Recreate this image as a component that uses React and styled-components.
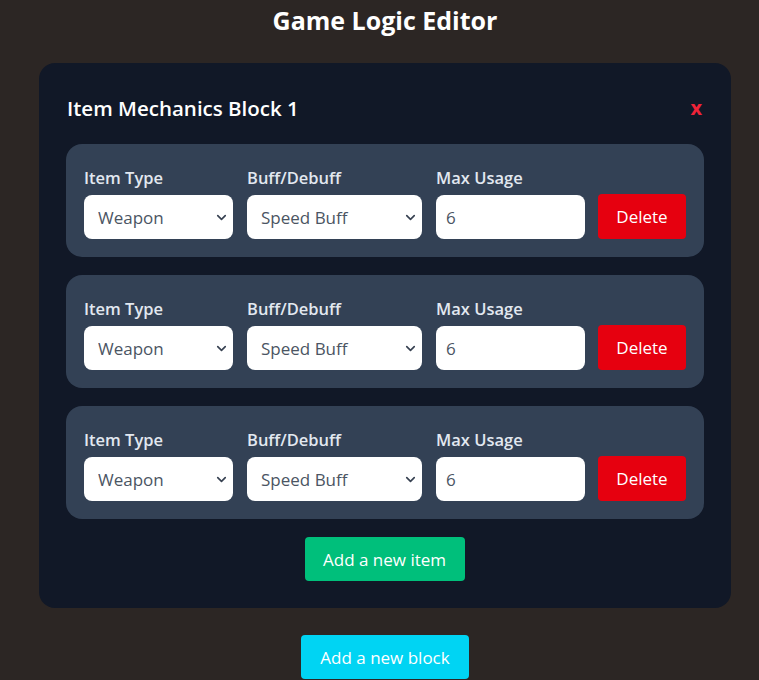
import React from 'react';
import styled, { createGlobalStyle } from 'styled-components';
import { ChevronDown } from 'lucide-react';

const GlobalStyle = createGlobalStyle`
  html, body {
    margin: 0;
    padding: 0;
    background: #2c2624;
    font-family: "Open Sans", "Noto Sans", sans-serif;
  }
  * { box-sizing: border-box; }
`;

const items = [1, 2, 3];

const App = () => {
    return (
        <Page>
            <GlobalStyle />
            <Title>Game Logic Editor</Title>
            <Block>
                <BlockHeader>
                    <BlockTitle>Item Mechanics Block 1</BlockTitle>
                    <CloseButton>x</CloseButton>
                </BlockHeader>
                <ItemList>
                    {items.map((i) => (
                        <ItemRow key={i}>
                            <Field width={149}>
                                <Label>Item Type</Label>
                                <SelectWrap>
                                    <Select defaultValue="weapon">
                                        <option value="weapon">Weapon</option>
                                        <option value="armor">Armor</option>
                                    </Select>
                                    <Chevron><ChevronDown size={15} strokeWidth={2.6} /></Chevron>
                                </SelectWrap>
                            </Field>
                            <Field width={175}>
                                <Label>Buff/Debuff</Label>
                                <SelectWrap>
                                    <Select defaultValue="speed">
                                        <option value="speed">Speed Buff</option>
                                        <option value="slow">Slow Debuff</option>
                                    </Select>
                                    <Chevron><ChevronDown size={15} strokeWidth={2.6} /></Chevron>
                                </SelectWrap>
                            </Field>
                            <Field width={149}>
                                <Label>Max Usage</Label>
                                <NumberInput type="text" defaultValue="6" />
                            </Field>
                            <DeleteButton>Delete</DeleteButton>
                        </ItemRow>
                    ))}
                </ItemList>
                <Centered gap={18}>
                    <ActionButton color="#00bf7b" width={160}>Add a new item</ActionButton>
                </Centered>
            </Block>
            <Centered gap={27}>
                <ActionButton color="#00d4f3" width={168}>Add a new block</ActionButton>
            </Centered>
        </Page>
    );
};

export default App;

const Page = styled.div`
    display: flex;
    flex-direction: column;
    align-items: center;
    padding-top: 3px;
    padding-left: 11px;
    height: 680px;
    overflow: hidden;
`;

const Title = styled.h1`
    margin: 0;
    height: 34px;
    line-height: 34px;
    font-size: 25px;
    font-weight: 700;
    color: #ffffff;
`;

const Block = styled.div`
    margin-top: 26px;
    width: 692px;
    background: #111827;
    border-radius: 16px;
    padding: 27px 29px 27px 28px;
`;

const BlockHeader = styled.div`
    display: flex;
    align-items: center;
    justify-content: space-between;
    height: 36px;
    margin-bottom: 18px;
`;

const BlockTitle = styled.h2`
    margin: 0;
    font-size: 20.5px;
    font-weight: 600;
    color: #ffffff;
`;

const CloseButton = styled.button`
    background: none;
    border: none;
    padding: 0;
    color: #ef2338;
    font-family: inherit;
    font-size: 20px;
    font-weight: 700;
    line-height: 1;
    cursor: pointer;
`;

const ItemList = styled.div`
    display: flex;
    flex-direction: column;
    gap: 18px;
    margin: 0 -2px 0 -1px;
`;

const ItemRow = styled.div`
    display: flex;
    align-items: flex-end;
    gap: 14px;
    height: 113px;
    padding: 0 17px 18px 18px;
    background: #334155;
    border-radius: 16px;
`;

const Field = styled.div`
    display: flex;
    flex-direction: column;
    flex-shrink: 0;
    width: ${(p) => p.width}px;
`;

const Label = styled.label`
    font-size: 16.5px;
    font-weight: 600;
    color: #e2e8f0;
    height: 26px;
    line-height: 25px;
    margin-bottom: 4px;
`;

const SelectWrap = styled.div`
    position: relative;
`;

const Select = styled.select`
    appearance: none;
    width: 100%;
    height: 44px;
    border: none;
    border-radius: 8px;
    background: #ffffff;
    padding: 0 28px 0 14px;
    font-family: inherit;
    font-size: 17px;
    color: #4b5563;
    outline: none;
`;

const Chevron = styled.span`
    position: absolute;
    right: 4px;
    top: 15px;
    color: #374151;
    pointer-events: none;
    display: flex;
`;

const NumberInput = styled.input`
    width: 100%;
    height: 44px;
    border: none;
    border-radius: 8px;
    background: #ffffff;
    padding: 0 10px;
    font-family: inherit;
    font-size: 17px;
    color: #4b5563;
    outline: none;
`;

const DeleteButton = styled.button`
    flex-shrink: 0;
    width: 88px;
    height: 45px;
    margin-left: -1px;
    border: none;
    border-radius: 4px;
    background: #e6000f;
    color: #ffffff;
    font-family: inherit;
    font-size: 17px;
    cursor: pointer;
`;

const Centered = styled.div`
    display: flex;
    justify-content: center;
    margin-top: ${(p) => p.gap}px;
`;

const ActionButton = styled.button`
    width: ${(p) => p.width}px;
    height: 44px;
    border: none;
    border-radius: 4px;
    background: ${(p) => p.color};
    color: #ffffff;
    font-family: inherit;
    font-size: 17px;
    cursor: pointer;
`;
